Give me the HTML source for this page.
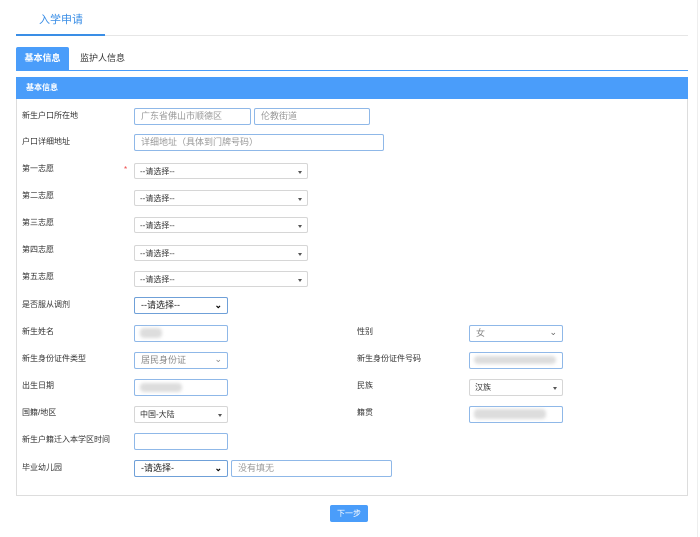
<!DOCTYPE html>
<html><head><meta charset="utf-8"><style>
*{box-sizing:border-box;margin:0;padding:0}
body{width:700px;height:537px;background:#fff;position:relative;font-family:"Liberation Sans","Noto Sans CJK SC",sans-serif;overflow:hidden}
.a{position:absolute}
.l{position:absolute;font-size:8px;color:#333;left:22px;white-space:nowrap}
.r{left:357px}
.in{position:absolute;height:17px;border:1px solid #8fb8e8;border-radius:2px;background:#fff;font-size:9px;color:#999;padding:3px 6px;line-height:9px;white-space:nowrap}
.sel{position:absolute;height:16px;border:1px solid #d6d6d6;border-radius:2px;background:#fff;font-size:8px;color:#333;padding:3px 5px;line-height:9px;white-space:nowrap}
.sel:after{content:"";position:absolute;right:5px;top:7px;border-left:2.5px solid transparent;border-right:2.5px solid transparent;border-top:3px solid #555}
.ns{position:absolute;height:17px;border:1px solid #6fa0d8;border-radius:2px;background:#fff;font-size:9px;color:#222;padding:3px 6px;line-height:9px}
.chev{position:absolute;right:5px;top:3px;font-size:9px;color:#000;font-weight:bold}
.blur{position:absolute;background:#ddd;border-radius:4px;filter:blur(1.5px)}
</style></head><body>
<div class="a" style="right:2px;top:0;width:1px;height:537px;background:#eee"></div>
<div class="a" style="left:39px;top:11px;font-size:11px;color:#3a8ee6">入学申请</div>
<div class="a" style="left:16px;top:35px;width:672px;height:1px;background:#e6e6e6"></div>
<div class="a" style="left:16px;top:34px;width:89px;height:2px;background:#3a8ee6"></div>
<div class="a" style="left:16px;top:47px;width:53px;height:23px;background:#4a9dfa;border-radius:2px 2px 0 0;color:#fff;font-size:9px;line-height:23px;text-align:center;font-weight:bold">基本信息</div>
<div class="a" style="left:80px;top:47px;font-size:9px;line-height:23px;color:#333">监护人信息</div>
<div class="a" style="left:16px;top:70px;width:672px;height:1px;background:#4a9dfa"></div>
<div class="a" style="left:16px;top:77px;width:672px;height:419px;border:1px solid #ddd"></div>
<div class="a" style="left:16px;top:77px;width:672px;height:22px;background:#4a9dfa;color:#fff;font-size:8px;font-weight:bold;line-height:22px;padding-left:10px">基本信息</div>

<div class="l" style="top:110px">新生户口所在地</div>
<div class="in" style="left:134px;top:108px;width:117px">广东省佛山市顺德区</div>
<div class="in" style="left:254px;top:108px;width:116px">伦教街道</div>
<div class="l" style="top:136px">户口详细地址</div>
<div class="in" style="left:134px;top:134px;width:250px">详细地址（具体到门牌号码）</div>

<div class="l" style="top:163px">第一志愿</div>
<div class="a" style="left:124px;top:165px;font-size:8px;color:#e44">*</div>
<div class="sel" style="left:134px;top:163px;width:174px">--请选择--</div>
<div class="l" style="top:190px">第二志愿</div>
<div class="sel" style="left:134px;top:190px;width:174px">--请选择--</div>
<div class="l" style="top:217px">第三志愿</div>
<div class="sel" style="left:134px;top:217px;width:174px">--请选择--</div>
<div class="l" style="top:244px">第四志愿</div>
<div class="sel" style="left:134px;top:245px;width:174px">--请选择--</div>
<div class="l" style="top:271px">第五志愿</div>
<div class="sel" style="left:134px;top:271px;width:174px">--请选择--</div>

<div class="l" style="top:299px">是否服从调剂</div>
<div class="ns" style="left:134px;top:297px;width:94px">--请选择--<span class="chev">⌄</span></div>

<div class="l" style="top:326px">新生姓名</div>
<div class="in" style="left:134px;top:325px;width:94px"></div>
<div class="blur" style="left:140px;top:328px;width:22px;height:10px"></div>
<div class="l r" style="top:326px">性别</div>
<div class="in" style="left:469px;top:325px;width:94px;color:#888">女<span style="position:absolute;right:5px;top:2px;color:#666">⌄</span></div>

<div class="l" style="top:353px">新生身份证件类型</div>
<div class="in" style="left:134px;top:352px;width:94px;color:#888">居民身份证<span style="position:absolute;right:5px;top:2px;color:#888">⌄</span></div>
<div class="l r" style="top:353px">新生身份证件号码</div>
<div class="in" style="left:469px;top:352px;width:94px"></div>
<div class="blur" style="left:474px;top:356px;width:82px;height:8px"></div>

<div class="l" style="top:380px">出生日期</div>
<div class="in" style="left:134px;top:379px;width:94px"></div>
<div class="blur" style="left:140px;top:383px;width:42px;height:9px"></div>
<div class="l r" style="top:380px">民族</div>
<div class="sel" style="left:469px;top:379px;width:94px;height:17px">汉族</div>

<div class="l" style="top:407px">国籍/地区</div>
<div class="sel" style="left:134px;top:406px;width:94px;height:17px">中国-大陆</div>
<div class="l r" style="top:407px">籍贯</div>
<div class="in" style="left:469px;top:406px;width:94px"></div>
<div class="blur" style="left:474px;top:409px;width:72px;height:10px"></div>

<div class="l" style="top:434px">新生户籍迁入本学区时间</div>
<div class="in" style="left:134px;top:433px;width:94px"></div>

<div class="l" style="top:462px">毕业幼儿园</div>
<div class="ns" style="left:134px;top:460px;width:94px">-请选择-<span class="chev">⌄</span></div>
<div class="in" style="left:231px;top:460px;width:161px">没有填无</div>

<div class="a" style="left:330px;top:505px;width:38px;height:17px;background:#4a9dfa;border-radius:2px;color:#fff;font-size:8px;line-height:17px;text-align:center">下一步</div>
</body></html>
